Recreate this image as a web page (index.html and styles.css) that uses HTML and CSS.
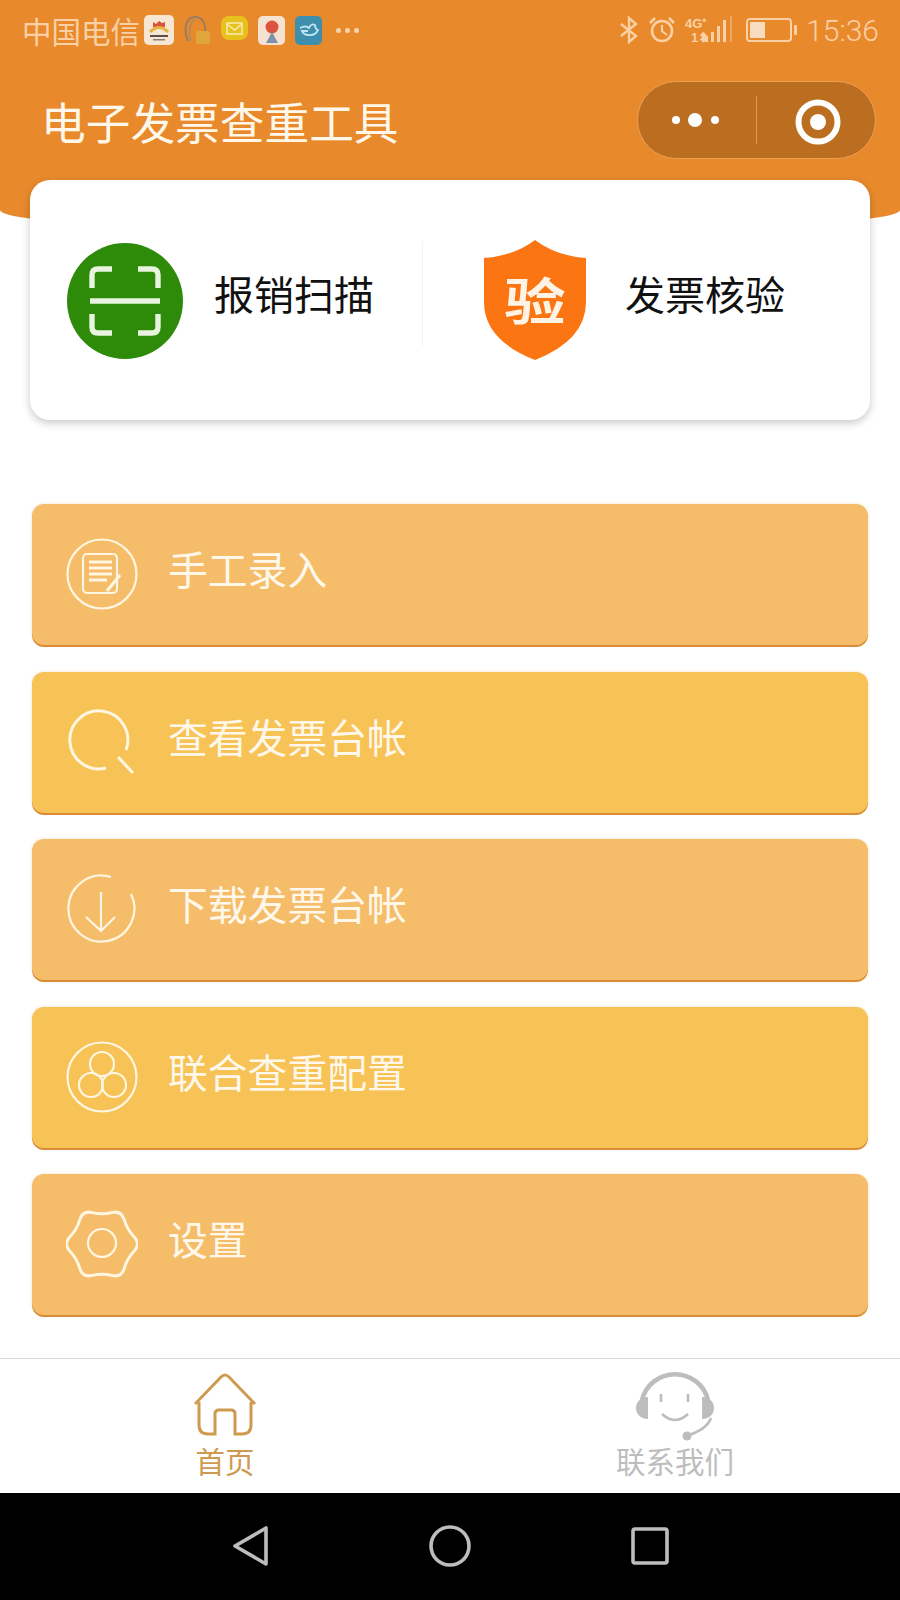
FILE: index.html
```html
<!DOCTYPE html>
<html>
<head>
    <title>电子发票查重工具</title>
    <link rel="stylesheet" href="styles.css">
</head>
<body>
    <div class="header">
        <div class="status-bar">
            <div class="status-left">
                <span class="carrier">中国电信</span>
                <svg class="app-icon" width="30" height="30" viewBox="0 0 30 30">
                    <rect width="30" height="30" rx="5" fill="#f6e6d2"/>
                    <path d="M9 12 V7 l3 2 l3 -3 l3 2 l3 -1 V12 Z" fill="#d8533a"/>
                    <path d="M6 17 Q15 8 24 17" fill="none" stroke="#e8b23c" stroke-width="3"/>
                    <rect x="6" y="20" width="18" height="2" fill="#5a5148"/>
                    <rect x="9" y="24" width="12" height="1.5" fill="#8a8074"/>
                </svg>
                <svg class="app-icon" width="27" height="30" viewBox="0 0 27 30">
                    <path d="M4 26 C-1 14 2 2 11 2 C19 2 22 10 21 17" fill="none" stroke="#9a7d5e" stroke-width="2"/>
                    <path d="M7 26 C4 16 6 6 11 5" fill="none" stroke="#a58a68" stroke-width="1.5"/>
                    <rect x="12" y="16" width="14" height="13" rx="2" fill="#e0a63c"/>
                </svg>
                <svg class="app-icon" width="27" height="28" viewBox="0 0 27 28">
                    <rect width="27" height="24" rx="8" fill="#e7c11d"/>
                    <rect x="6" y="7" width="15" height="11" fill="none" stroke="#f9ecb0" stroke-width="1.5"/>
                    <path d="M6 8 L13.5 14 L21 8" fill="none" stroke="#f9ecb0" stroke-width="1.5"/>
                </svg>
                <svg class="app-icon" width="27" height="29" viewBox="0 0 27 29">
                    <rect width="27" height="29" rx="5" fill="#f5e2d0"/>
                    <circle cx="14" cy="11" r="6.5" fill="#dd5340"/>
                    <path d="M14 16 L8 27 H20 Z" fill="#7d93a8"/>
                </svg>
                <svg class="app-icon" width="27" height="29" viewBox="0 0 27 29">
                    <rect width="27" height="29" rx="5" fill="#3e8fae"/>
                    <path d="M5 12 Q11 9 14 12 Q16 7 20 9 Q20 13 23 14 Q20 20 13 19 Q9 19 7 15 H13" fill="none" stroke="#bfe6ee" stroke-width="1.8"/>
                </svg>
                <span class="more-dots"><i></i><i></i><i></i></span>
            </div>
            <div class="status-right">
                <svg width="20" height="28" viewBox="0 0 20 28">
                    <path d="M2 8 L17 20 L10 26 V2 L17 8 L2 20" fill="none" stroke="#fbd0a4" stroke-width="2.4"/>
                </svg>
                <svg width="26" height="28" viewBox="0 0 26 28">
                    <circle cx="13" cy="15" r="10" fill="none" stroke="#fbd0a4" stroke-width="2.6"/>
                    <path d="M13 9 V15 L18 19" fill="none" stroke="#fbd0a4" stroke-width="2.2"/>
                    <path d="M1 7 L6 2 M20 2 L25 7" stroke="#fbd0a4" stroke-width="2.6"/>
                </svg>
                <svg class="net-icon" width="48" height="30" viewBox="0 0 48 30">
                    <text x="0" y="13" class="net-label">4G⁺</text>
                    <text x="6" y="27" class="net-label">1⬍</text>
                    <rect x="20" y="21" width="3" height="6" fill="#fbd0a4"/>
                    <rect x="26" y="17" width="3" height="10" fill="#fbd0a4"/>
                    <rect x="32" y="11" width="3" height="16" fill="#fbd0a4"/>
                    <rect x="38" y="5" width="3" height="22" fill="#fbd0a4"/>
                    <rect x="45" y="1" width="2" height="26" fill="#eda764"/>
                </svg>
                <svg width="53" height="26" viewBox="0 0 53 26">
                    <rect x="1" y="2" width="44" height="22" rx="3" fill="none" stroke="#fbd0a4" stroke-width="2"/>
                    <rect x="4" y="5" width="15" height="16" fill="#f8dcc0"/>
                    <rect x="48" y="8" width="3" height="10" rx="1" fill="#fbd0a4"/>
                </svg>
                <span class="clock">15:36</span>
            </div>
        </div>
        <div class="title-bar">
            <span class="app-title">电子发票查重工具</span>
            <div class="capsule">
                <div class="capsule-part dots">
                    <svg width="60" height="20" viewBox="0 0 60 20">
                        <circle cx="10" cy="10" r="4" fill="#fff"/>
                        <circle cx="29" cy="10" r="7" fill="#fff"/>
                        <circle cx="49" cy="10" r="4" fill="#fff"/>
                    </svg>
                </div>
                <div class="capsule-line"></div>
                <div class="capsule-part record">
                    <svg width="46" height="46" viewBox="0 0 46 46">
                        <circle cx="23" cy="23" r="19.5" fill="none" stroke="#fff" stroke-width="6"/>
                        <circle cx="23" cy="23" r="8" fill="#fff"/>
                    </svg>
                </div>
            </div>
        </div>
    </div>

    <div class="main-card">
        <div class="card-half">
            <svg width="116" height="116" viewBox="0 0 116 116">
                <circle cx="58" cy="58" r="58" fill="#2e8b0a"/>
                <path d="M25 45 V32 Q25 26 31 26 H45 M71 26 H85 Q91 26 91 32 V45 M25 71 V84 Q25 90 31 90 H45 M71 90 H85 Q91 90 91 84 V71" fill="none" stroke="#e8f4de" stroke-width="5.4"/>
                <path d="M23 58 H93" stroke="#e8f4de" stroke-width="5.4"/>
            </svg>
            <span class="card-text scan-text">报销扫描</span>
        </div>
        <div class="card-line"></div>
        <div class="card-half verify">
            <div class="shield">
                <svg width="102" height="120" viewBox="0 0 102 120">
                    <path d="M51 0 Q72 16 102 18 V62 Q102 100 51 120 Q0 100 0 62 V18 Q30 16 51 0 Z" fill="#fb7613"/>
                </svg>
                <span class="shield-text">验</span>
            </div>
            <span class="card-text">发票核验</span>
        </div>
    </div>

    <div class="menu">
        <div class="menu-row">
            <svg class="row-icon" width="72" height="72" viewBox="0 0 72 72">
                <circle cx="36" cy="36" r="34.5" class="line"/>
                <rect x="17" y="16" width="34" height="39" rx="4" class="line"/>
                <path d="M23 24 H46 M23 30 H46 M23 36 H46 M23 42 H41" class="line thick"/>
                <path d="M41 53 L54 37" class="line thick"/>
            </svg>
            <span class="row-text">手工录入</span>
        </div>
        <div class="menu-row alt">
            <svg class="row-icon" width="72" height="72" viewBox="0 0 72 72">
                <path d="M40 62 A29 29 0 1 1 60 44" class="line thick"/>
                <path d="M52 51 L67 67" class="line thick"/>
            </svg>
            <span class="row-text">查看发票台帐</span>
        </div>
        <div class="menu-row">
            <svg class="row-icon" width="72" height="72" viewBox="0 0 72 72">
                <path d="M45 4 A33 33 0 1 0 65 21" class="line"/>
                <path d="M35 19 V58 M20 44 L35 58 L49 44" class="line"/>
            </svg>
            <span class="row-text">下载发票台帐</span>
        </div>
        <div class="menu-row alt">
            <svg class="row-icon" width="72" height="72" viewBox="0 0 72 72">
                <circle cx="36" cy="36" r="34.5" class="line"/>
                <circle cx="36" cy="23" r="12" class="line"/>
                <circle cx="25" cy="44" r="12" class="line"/>
                <circle cx="48" cy="44" r="12" class="line"/>
            </svg>
            <span class="row-text">联合查重配置</span>
        </div>
        <div class="menu-row">
            <svg class="row-icon" width="72" height="72" viewBox="-36 -36 72 72">
                <path d="M-9.75 -31.4 Q0 -29 9.75 -31.4 Q19.5 -33.8 22.3 -24.15 Q25.1 -14.5 32.05 -7.25 Q39 0 32.05 7.25 Q25.1 14.5 22.3 24.15 Q19.5 33.8 9.75 31.4 Q0 29 -9.75 31.4 Q-19.5 33.8 -22.3 24.15 Q-25.1 14.5 -32.05 7.25 Q-39 0 -32.05 -7.25 Q-25.1 -14.5 -22.3 -24.15 Q-19.5 -33.8 -9.75 -31.4 Z" class="line thick"/>
                <circle cx="0" cy="-1" r="14" class="line"/>
            </svg>
            <span class="row-text">设置</span>
        </div>
    </div>

    <div class="tab-bar">
        <div class="tab active">
            <svg width="62" height="72" viewBox="0 0 62 72">
                <path d="M1 34 L27 7 Q31 3 35 7 L61 34" fill="none" stroke="#cf9a4f" stroke-width="3"/>
                <path d="M5 32 V55 Q5 64 14 64 H21 V44 Q21 40 25 40 H37 Q41 40 41 44 V64 H48 Q57 64 57 55 V32" fill="none" stroke="#cf9a4f" stroke-width="3"/>
            </svg>
            <span class="tab-label">首页</span>
        </div>
        <div class="tab">
            <svg width="80" height="72" viewBox="0 0 80 72">
                <path d="M7 30 A34 34 0 0 1 73 30" fill="none" stroke="#bdbdbd" stroke-width="4.6"/>
                <path d="M13 27 C-3 27 -3 49 13 49 Z M67 27 C83 27 83 49 67 49 Z" fill="#bdbdbd"/>
                <path d="M76 48 Q72 59 54 65" fill="none" stroke="#bdbdbd" stroke-width="2.6"/>
                <circle cx="52" cy="66" r="4.5" fill="#bdbdbd"/>
                <path d="M26 24 V32 M53 24 V32" stroke="#bdbdbd" stroke-width="2.6"/>
                <path d="M27 44 Q40 56 53 44" fill="none" stroke="#bdbdbd" stroke-width="2.6"/>
            </svg>
            <span class="tab-label">联系我们</span>
        </div>
    </div>

    <div class="nav-bar">
        <svg width="36" height="42" viewBox="0 0 36 42">
            <path d="M33 3 V39 L2 21 Z" fill="none" stroke="#bdbdbd" stroke-width="3.6" stroke-linejoin="round"/>
        </svg>
        <svg width="42" height="42" viewBox="0 0 42 42">
            <circle cx="21" cy="21" r="19" fill="none" stroke="#bdbdbd" stroke-width="3.6"/>
        </svg>
        <svg width="38" height="38" viewBox="0 0 38 38">
            <rect x="2" y="2" width="34" height="34" rx="2" fill="none" stroke="#bdbdbd" stroke-width="3.6"/>
        </svg>
    </div>
</body>
</html>
```

FILE: styles.css
```css
body { margin: 0; width: 900px; background: #fff; font-family: "Noto Sans CJK SC", "Noto Sans", sans-serif; }

.header { height: 234px; background: #e88a2c; border-radius: 0 0 50% 50% / 0 0 24px 24px; }
.status-bar { height: 60px; display: flex; justify-content: space-between; align-items: center; padding: 0 21px 0 22px; }
.status-left { display: flex; align-items: center; gap: 10px; }
.carrier { font-size: 29.5px; color: #fbd0a4; margin-right: -6px; }
.more-dots { display: flex; gap: 4px; margin-left: 4px; }
.more-dots i { width: 5px; height: 5px; border-radius: 50%; background: #f8d3ac; }
.status-right { display: flex; align-items: center; gap: 10px; }
.net-icon { margin-right: 3px; }
.net-label { font-family: "Liberation Sans", sans-serif; font-size: 13px; font-weight: bold; fill: #fbd0a4; }
.clock { font-family: Roboto, sans-serif; font-weight: 300; font-size: 30px; color: #fbd0a4; margin-left: -3px; }

.title-bar { display: flex; justify-content: space-between; align-items: flex-start; padding: 21px 24px 0 41px; }
.app-title { font-size: 44.7px; color: #fff8ea; line-height: 78px; margin-top: 1px; }
.capsule { width: 239px; height: 78px; box-sizing: border-box; display: flex; align-items: center; background: #bb6d20; border: 1px solid #ec9f57; border-radius: 39px; }
.capsule-part { flex: 1; display: flex; justify-content: center; align-items: center; }
.capsule-part.dots { flex: none; width: 116px; padding-right: 2px; }
.capsule-part.record { padding: 3px 0 0 4px; }
.capsule-line { width: 1px; height: 48px; background: #e0994f; }

.main-card { height: 240px; box-sizing: border-box; padding-top: 2px; margin: -54px 30px 0; position: relative; display: flex; align-items: center; background: #fff; border-radius: 20px; box-shadow: 0 3px 8px rgba(0, 0, 0, 0.22); }
.card-half { width: 392px; display: flex; align-items: center; padding-left: 37px; box-sizing: border-box; }
.card-line { width: 1px; height: 105px; background: #f5f3f0; margin-bottom: 16px; }
.card-half.verify { padding-left: 61px; width: 447px; }
.card-text { font-size: 40px; color: #111; margin-left: 39px; line-height: 56px; margin-top: -16px; }
.scan-text { margin-left: 31px; }
.shield { position: relative; width: 102px; height: 120px; margin-top: -2px; }
.shield-text { position: absolute; left: 0; right: 0; top: 22px; text-align: center; font-size: 58px; line-height: 72px; font-weight: bold; color: #fff3e6; transform: scale(1.06, 0.86); }

.menu { margin: 84px 32px 0; display: flex; flex-direction: column; gap: 26.5px; }
.menu-row { height: 141px; box-sizing: border-box; display: flex; padding: 34px 0 0 34px; background: #f5bd69; border-radius: 12px; box-shadow: 0 2px 0 #d98c35, 0 0 3px rgba(220, 170, 100, 0.4); }
.menu-row.alt { background: #f7c256; }
.row-icon { flex: none; }
.row-text { margin-left: 30px; font-size: 39.8px; line-height: 60px; color: #fff8ea; }
.line { fill: none; stroke: #fff6e2; stroke-width: 2.2; }
.line.thick { stroke-width: 3; }

.tab-bar { height: 135px; box-sizing: border-box; margin-top: 42.5px; display: flex; border-top: 1px solid #d8d8d8; }
.tab { flex: 1; display: flex; flex-direction: column; align-items: center; padding-top: 11px; color: #bdbdbd; }
.tab svg { height: 72px; }
.tab.active { color: #cf9a4f; }
.tab-label { font-size: 29.5px; line-height: 40px; margin-top: -2px; }

.nav-bar { height: 107px; background: #000; display: flex; justify-content: center; align-items: center; gap: 160px; padding-left: 2px; }
```
